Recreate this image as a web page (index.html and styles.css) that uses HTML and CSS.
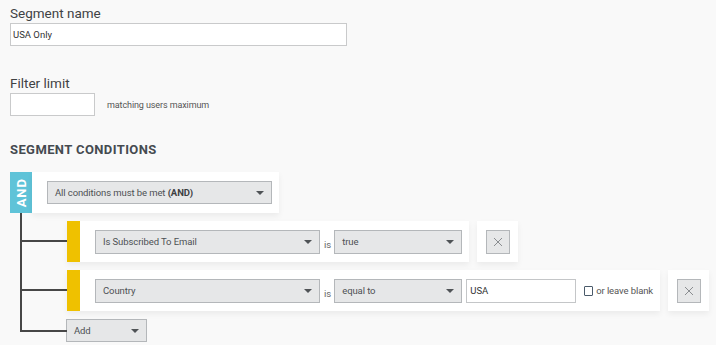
FILE: index.html
```html
<!DOCTYPE html>
<html>
<head>
<meta charset="utf-8">
<link rel="stylesheet" href="styles.css">
</head>
<body>
<div class="page">
  <div class="field">
    <div class="label">Segment name</div>
    <div class="text-input wide">USA Only</div>
  </div>
  <div class="field limit">
    <div class="label">Filter limit</div>
    <div class="limit-row">
      <div class="text-input small"></div>
      <span class="hint">matching users maximum</span>
    </div>
  </div>
  <h2 class="section-title">SEGMENT CONDITIONS</h2>
  <div class="tree">
    <div class="group-head">
      <div class="badge"><span>AND</span></div>
      <div class="panel head-panel">
        <div class="select w-group"><span>All conditions must be met <b>(AND)</b></span><i class="caret"></i></div>
      </div>
    </div>
    <div class="children">
      <div class="child">
        <div class="panel cond">
          <div class="bar"></div>
          <div class="cond-body">
            <div class="select w-field"><span>Is Subscribed To Email</span><i class="caret"></i></div>
            <span class="is">is</span>
            <div class="select w-op"><span>true</span><i class="caret"></i></div>
          </div>
        </div>
        <div class="panel remove"><div class="x-btn"><svg width="10" height="10" viewBox="0 0 10 10"><path d="M1 1L9 9M9 1L1 9" stroke="#8a8d90" stroke-width="1"/></svg></div></div>
      </div>
      <div class="child">
        <div class="panel cond">
          <div class="bar"></div>
          <div class="cond-body">
            <div class="select w-field"><span>Country</span><i class="caret"></i></div>
            <span class="is">is</span>
            <div class="select w-op"><span>equal to</span><i class="caret"></i></div>
            <div class="text-input value">USA</div>
            <span class="check"><span class="box"></span>or leave blank</span>
          </div>
        </div>
        <div class="panel remove"><div class="x-btn"><svg width="10" height="10" viewBox="0 0 10 10"><path d="M1 1L9 9M9 1L1 9" stroke="#8a8d90" stroke-width="1"/></svg></div></div>
      </div>
      <div class="child add-row">
        <div class="select w-add"><span>Add</span><i class="caret"></i></div>
      </div>
    </div>
  </div>
</div>
</body>
</html>
```
FILE: styles.css
```css
html, body {
  margin: 0;
  padding: 0;
  background: #f9f9f9;
}
body {
  font-family: Roboto, "Liberation Sans", sans-serif;
  color: #444;
}
.page {
  padding: 5px 10px 0 10px;
}
.label {
  font-size: 13.5px;
  line-height: 16px;
  color: #3f4244;
  margin-bottom: 2px;
}
.text-input {
  box-sizing: border-box;
  background: #fff;
  border: 1px solid #c9cacb;
  height: 23px;
  font-size: 9.5px;
  line-height: 21px;
  padding-left: 2px;
  color: #333;
  flex-shrink: 0;
}
.wide { width: 337px; }
.small { width: 85px; }
.limit { margin-top: 29px; }
.limit-row {
  display: flex;
  align-items: center;
  gap: 12px;
}
.hint {
  font-size: 9px;
  color: #555;
  padding-top: 1px;
  letter-spacing: -0.1px;
}
.section-title {
  margin: 27px 0 0 0;
  font-size: 13px;
  line-height: 14px;
  font-weight: 700;
  color: #454a50;
  letter-spacing: 0.4px;
}
.tree {
  margin-top: 15px;
}
.group-head {
  display: flex;
  height: 41px;
}
.badge {
  width: 22px;
  background: #5fc3d8;
  display: flex;
  align-items: center;
  justify-content: center;
}
.badge span {
  writing-mode: vertical-rl;
  transform: rotate(180deg);
  color: #fff;
  font-weight: 700;
  font-size: 13px;
  letter-spacing: 1px;
}
.panel {
  background: #fff;
  box-shadow: 0 3px 6px rgba(0, 0, 0, 0.06);
  flex-shrink: 0;
}
.head-panel {
  width: 247px;
  box-sizing: border-box;
  padding: 9px 0 0 15px;
}
.select {
  box-sizing: border-box;
  flex-shrink: 0;
  height: 23px;
  background: #e6e7e8;
  border: 1px solid #b4b7ba;
  display: flex;
  align-items: center;
  justify-content: space-between;
  padding: 0 7px 0 7px;
  font-size: 9.5px;
  letter-spacing: -0.1px;
  color: #4d5154;
}
.select b { font-weight: 700; color: #3d4043; }
.caret {
  width: 0;
  height: 0;
  border-left: 4px solid transparent;
  border-right: 4px solid transparent;
  border-top: 4px solid #4f5356;
  margin-top: 1px;
}
.w-group { width: 225px; }
.w-field { width: 225px; height: 24px; padding-left: 7px; }
.w-op { width: 128px; height: 24px; }
.w-add { width: 81px; }
.children {
  position: relative;
  padding: 8px 0 0 0;
  display: flex;
  flex-direction: column;
  gap: 8px;
}
.children::before {
  content: "";
  position: absolute;
  left: 10px;
  top: 0;
  bottom: 10px;
  width: 2px;
  background: #474747;
}
.child {
  position: relative;
  display: flex;
  align-items: stretch;
  padding-left: 57px;
  gap: 8px;
}
.child::before {
  content: "";
  position: absolute;
  left: 12px;
  width: 45px;
  top: calc(50% - 2px);
  height: 2px;
  background: #474747;
}
.add-row::before { top: calc(50% - 1px); }
.cond {
  display: flex;
  height: 41px;
}
.bar {
  width: 13px;
  background: #efc100;
}
.cond-body {
  display: flex;
  align-items: center;
  padding: 0 7px 0 15px;
}
.is {
  font-size: 9.5px;
  color: #666;
  margin: 6px 3px 0 4px;
}
.value {
  width: 110px;
  height: 24px;
  margin-left: 4px;
  line-height: 22px;
  padding-left: 3px;
  border-color: #c4c6c8;
}
.check {
  display: flex;
  align-items: center;
  font-size: 9.5px;
  color: #555;
  margin-left: 8px;
  white-space: nowrap;
  flex-shrink: 0;
  letter-spacing: -0.1px;
}
.box {
  width: 7px;
  height: 8px;
  border: 1px solid #4a5a6a;
  border-radius: 1px;
  margin-right: 3px;
  background: #fff;
}
.remove {
  width: 41px;
  height: 41px;
  display: flex;
  align-items: center;
  justify-content: center;
}
.x-btn {
  box-sizing: border-box;
  width: 24px;
  height: 24px;
  background: #e6e7e8;
  border: 1px solid #b4b7ba;
  display: flex;
  align-items: center;
  justify-content: center;
}
.x-btn svg { display: block; }
.add-row { gap: 0; padding-left: 56px; }
```
